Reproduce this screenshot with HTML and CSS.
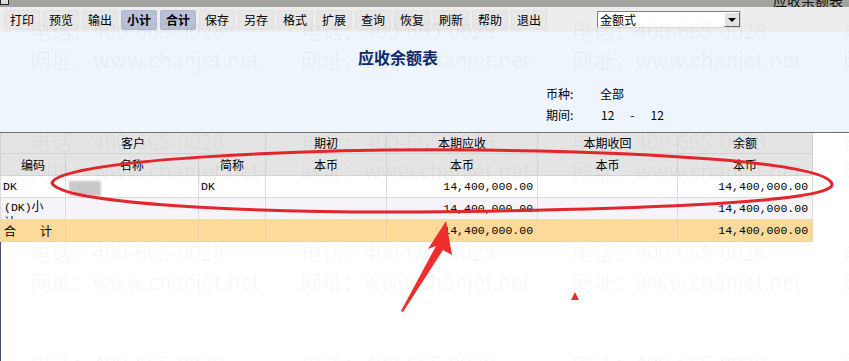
FILE: index.html
```html
<!DOCTYPE html>
<html lang="zh-CN">
  <head>
    <meta charset="UTF-8" />
    <title>应收余额表</title>
    <link rel="stylesheet" href="styles.css">
  </head>
  <body>
    <div class="window">
      <div class="titlebar">
        <span class="sysbox"></span>
        <span class="wintitle">应收余额表</span>
      </div>

      <div class="toolbar">
        <button class="tool">打印</button>
        <button class="tool">预览</button>
        <button class="tool">输出</button>
        <button class="tool active">小计</button>
        <button class="tool active">合计</button>
        <button class="tool">保存</button>
        <button class="tool">另存</button>
        <button class="tool">格式</button>
        <button class="tool">扩展</button>
        <button class="tool">查询</button>
        <button class="tool">恢复</button>
        <button class="tool">刷新</button>
        <button class="tool">帮助</button>
        <button class="tool">退出</button>
        <div class="combo">
          <span class="combo-text">金额式</span>
          <span class="combo-btn"><i class="combo-arrow"></i></span>
        </div>
      </div>

      <div class="report-head">
        <h1 class="report-title">应收余额表</h1>
        <div class="report-info">
          <div class="info-row"><span class="info-label">币种:</span><span>全部</span></div>
          <div class="info-row">
            <span class="info-label">期间:</span>
            <span class="period"><span>12</span><span>-</span><span>12</span></span>
          </div>
        </div>
      </div>

      <div class="sheet">
        <table class="grid">
          <colgroup>
            <col style="width: 65px" />
            <col style="width: 133px" />
            <col style="width: 67px" />
            <col style="width: 121px" />
            <col style="width: 151px" />
            <col style="width: 140px" />
            <col style="width: 135px" />
          </colgroup>
          <thead>
            <tr class="head1">
              <th colspan="3">客户</th>
              <th>期初</th>
              <th>本期应收</th>
              <th>本期收回</th>
              <th>余额</th>
            </tr>
            <tr class="head2">
              <th>编码</th>
              <th>名称</th>
              <th>简称</th>
              <th>本币</th>
              <th>本币</th>
              <th>本币</th>
              <th>本币</th>
            </tr>
          </thead>
          <tbody>
            <tr class="row-data">
              <td class="mono">DK</td>
              <td><span class="masked"></span></td>
              <td class="mono">DK</td>
              <td></td>
              <td class="num">14,400,000.00</td>
              <td></td>
              <td class="num">14,400,000.00</td>
            </tr>
            <tr class="row-sub">
              <td><div class="wrap-cell"><span class="mono">(DK)</span>小计:</div></td>
              <td></td>
              <td></td>
              <td></td>
              <td class="num">14,400,000.00</td>
              <td></td>
              <td class="num">14,400,000.00</td>
            </tr>
            <tr class="row-total">
              <td>合&emsp;&emsp;计</td>
              <td></td>
              <td></td>
              <td></td>
              <td class="num">14,400,000.00</td>
              <td></td>
              <td class="num">14,400,000.00</td>
            </tr>
          </tbody>
        </table>
      </div>

      <div class="watermark">
        <div class="wm"><span>电话：400-665-0028</span><span>网址：www.chanjet.net</span></div>
        <div class="wm"><span>电话：400-665-0028</span><span>网址：www.chanjet.net</span></div>
        <div class="wm"><span>电话：400-665-0028</span><span>网址：www.chanjet.net</span></div>
        <div class="wm"><span>电话：400-665-0028</span><span>网址：www.chanjet.net</span></div>
        <div class="wm"><span>电话：400-665-0028</span><span>网址：www.chanjet.net</span></div>
        <div class="wm"><span>电话：400-665-0028</span><span>网址：www.chanjet.net</span></div>
        <div class="wm"><span>电话：400-665-0028</span><span>网址：www.chanjet.net</span></div>
        <div class="wm"><span>电话：400-665-0028</span><span>网址：www.chanjet.net</span></div>
        <div class="wm"><span>电话：400-665-0028</span><span>网址：www.chanjet.net</span></div>
        <div class="wm"><span>电话：400-665-0028</span><span>网址：www.chanjet.net</span></div>
        <div class="wm"><span>电话：400-665-0028</span><span>网址：www.chanjet.net</span></div>
        <div class="wm"><span>电话：400-665-0028</span><span>网址：www.chanjet.net</span></div>
        <div class="wm"><span>电话：400-665-0028</span><span>网址：www.chanjet.net</span></div>
        <div class="wm"><span>电话：400-665-0028</span><span>网址：www.chanjet.net</span></div>
        <div class="wm"><span>电话：400-665-0028</span><span>网址：www.chanjet.net</span></div>
        <div class="wm"><span>电话：400-665-0028</span><span>网址：www.chanjet.net</span></div>
      </div>

      <!-- hand-drawn annotation marks -->
      <svg class="marks" width="849" height="361" viewBox="0 0 849 361">
        <path d="M52,183 C58,160 300,148 480,150 C650,152 826,162 832,184 C836,204 600,210 420,212 C250,213 62,204 52,183 Z"
              fill="none" stroke="#e3262b" stroke-width="3" />
        <polygon points="446,221 452,255 443,250 403,312 401,311 436,246 428,249" fill="#ee2d2d" />
        <polygon points="575,292 571,300 579,300" fill="#ee2d2d" />
      </svg>
    </div>
  </body>
</html>
```

FILE: styles.css
```css
body {
  margin: 0;
  font-family: "Noto Sans CJK SC", "Liberation Sans", sans-serif;
  font-size: 12px;
  color: #000;
}
.window {
  position: relative;
  width: 849px;
  height: 361px;
  overflow: hidden;
  background: #fff;
}
.titlebar {
  height: 7px;
  background: #a2a29f;
  display: flex;
  align-items: flex-end;
  justify-content: space-between;
  overflow: hidden;
}
.sysbox {
  width: 7px;
  height: 5px;
  margin-bottom: 2px;
  border: 1px solid #222;
  border-top: none;
  background: #ddd;
}
.wintitle {
  font-size: 14px;
  line-height: 14px;
  margin-right: 6px;
  color: #111;
}
.toolbar {
  height: 25px;
  background: #ededed;
  display: flex;
  align-items: center;
  gap: 3px;
  padding-left: 4px;
}
.tool {
  width: 36px;
  height: 20px;
  padding: 0;
  border: 1px solid #e2e2e2;
  border-radius: 2px;
  background: #e7e7e7;
  font-family: "Noto Sans CJK SC", sans-serif;
  font-size: 12px;
  color: #000;
  cursor: pointer;
}
.tool.active {
  background: #b8c0d7;
  border-color: #b0b8d0;
  font-weight: bold;
}
.combo {
  margin-left: 47px;
  width: 144px;
  height: 17px;
  box-sizing: border-box;
  border: 1px solid #808080;
  border-right-color: #d8d8d8;
  border-bottom-color: #d8d8d8;
  background: #fff;
  display: flex;
  align-items: center;
}
.combo-text {
  flex: 1;
  padding-left: 2px;
  line-height: 15px;
}
.combo-btn {
  width: 16px;
  height: 15px;
  box-sizing: border-box;
  background: #e4e4e4;
  border: 1px solid #fff;
  border-right-color: #6a6a6a;
  border-bottom-color: #6a6a6a;
  display: flex;
  align-items: center;
  justify-content: center;
}
.combo-arrow {
  width: 0;
  height: 0;
  border-left: 4px solid transparent;
  border-right: 4px solid transparent;
  border-top: 4px solid #000;
}
.report-head {
  height: 100px;
  box-sizing: border-box;
  background: #eef5fd;
  padding-top: 15px;
}
.report-title {
  margin: 0;
  width: 796px;
  text-align: center;
  font-size: 16px;
  line-height: 20px;
  font-weight: bold;
  color: #102a6b;
}
.report-info {
  margin: 16px 0 0 546px;
}
.info-row {
  display: flex;
  height: 21px;
  line-height: 21px;
}
.info-label {
  width: 54px;
}
.period {
  display: flex;
  gap: 16px;
  padding-left: 1px;
}
.sheet {
  height: 229px;
  box-sizing: border-box;
  border-top: 1px solid #6e6e6e;
  border-left: 1px solid #44506c;
  background: #fff;
}
.grid {
  width: 812px;
  margin-left: -1px;
  table-layout: fixed;
  border-collapse: collapse;
}
.grid th {
  background: #e4e4e4;
  font-weight: normal;
  border: 1px solid #d2d2d2;
  border-top: none;
  padding: 0;
  text-align: center;
}
.head1 th {
  height: 20px;
  line-height: 20px;
}
.head2 th {
  height: 21px;
  line-height: 21px;
}
.grid td {
  height: 21px;
  padding: 0 3px;
  border: 1px solid #dcdcdc;
  white-space: nowrap;
  overflow: hidden;
  vertical-align: middle;
}
.row-data td {
  background: #fff;
}
.row-sub td {
  background: #f6f4f9;
}
.row-total td {
  background: #fdd99a;
  border-color: #ead7b2;
}
.mono,
.num {
  font-family: "Liberation Mono", monospace;
  font-size: 11.5px;
}
.grid td.num {
  text-align: right;
  padding-right: 4px;
}
.grid td.mono {
  padding-left: 2px;
}
.wrap-cell {
  width: 48px;
  height: 21px;
  overflow: hidden;
  white-space: normal;
  word-break: break-all;
  line-height: 14px;
  padding-top: 1px;
  box-sizing: border-box;
}
.masked {
  display: inline-block;
  width: 32px;
  height: 15px;
  vertical-align: middle;
  background: #c8c8c8;
  filter: blur(1px);
}
.watermark {
  position: absolute;
  top: 0;
  left: 0;
  display: grid;
  grid-template-columns: repeat(4, 271px);
  grid-auto-rows: 111px;
  padding: 16px 0 0 30px;
  pointer-events: none;
}
.wm {
  display: flex;
  flex-direction: column;
  font-size: 21px;
  line-height: 29px;
  white-space: nowrap;
  color: rgba(0, 0, 0, 0.045);
}
.marks {
  position: absolute;
  top: 0;
  left: 0;
  pointer-events: none;
}
```
